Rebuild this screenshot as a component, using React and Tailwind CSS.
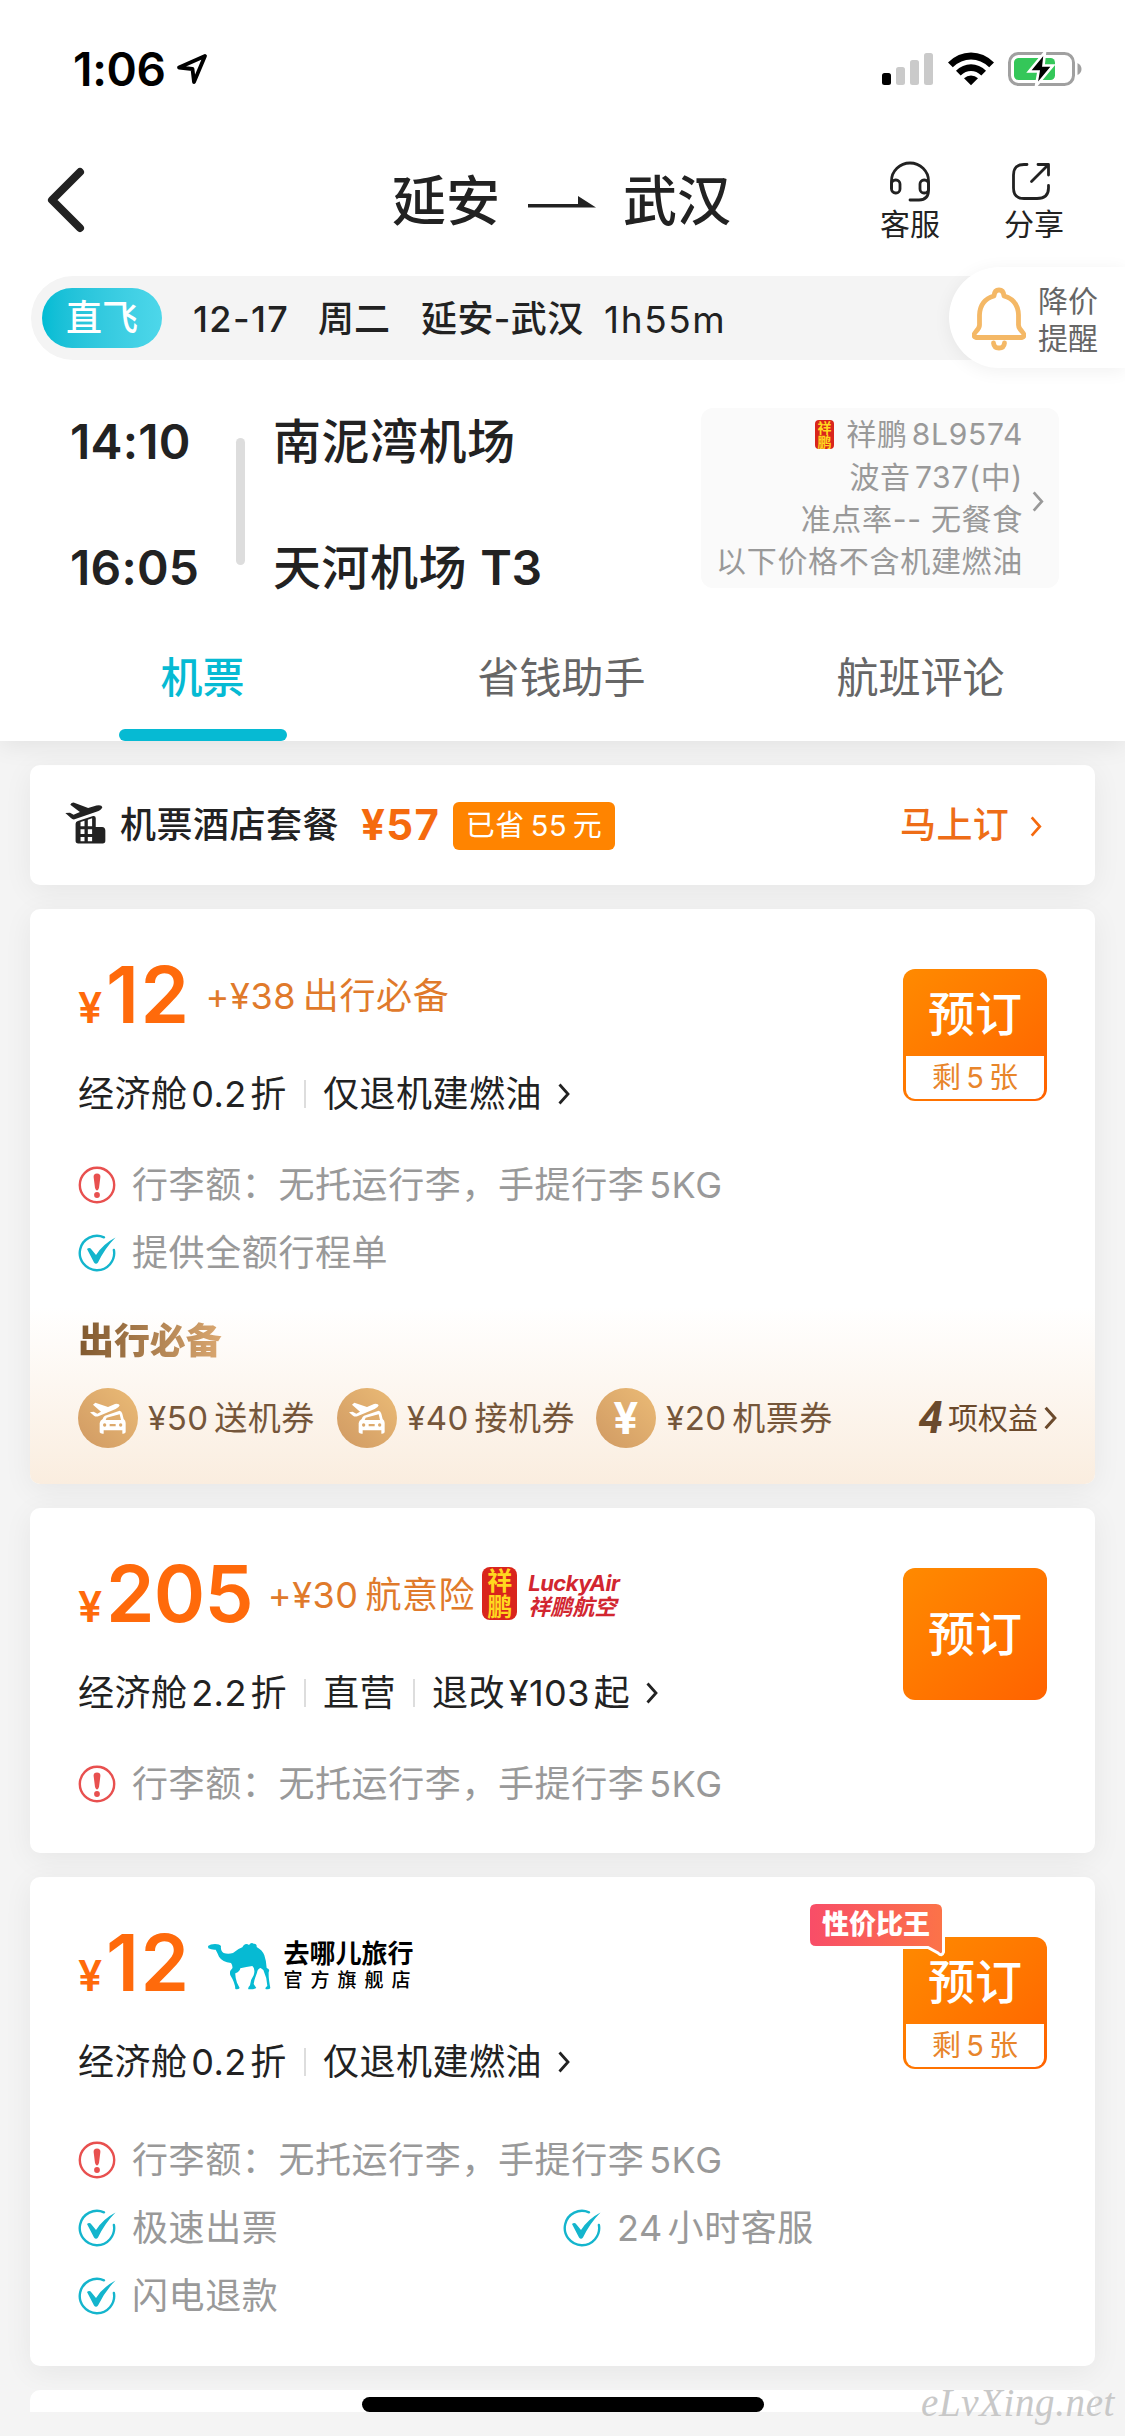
import React from "react";

const offers = [
  {
    id: 1,
    price: "12",
    extra: "+¥38 出行必备",
    cabin: "经济舱 0.2 折",
    rules: ["仅退机建燃油"],
    left: "剩 5 张",
    features: [
      { type: "warn", text: "行李额：无托运行李，手提行李 5KG" },
      { type: "ok", text: "提供全额行程单" },
    ],
    benefits: [
      { icon: "car", text: "¥50 送机券" },
      { icon: "car", text: "¥40 接机券" },
      { icon: "yuan", text: "¥20 机票券" },
    ],
  },
  {
    id: 2,
    price: "205",
    extra: "+¥30 航意险",
    logo: "lucky",
    cabin: "经济舱 2.2 折",
    rules: ["直营", "退改 ¥103 起"],
    features: [{ type: "warn", text: "行李额：无托运行李，手提行李 5KG" }],
  },
  {
    id: 3,
    price: "12",
    logo: "qunar",
    cabin: "经济舱 0.2 折",
    rules: ["仅退机建燃油"],
    left: "剩 5 张",
    badge: "性价比王",
    features: [
      { type: "warn", text: "行李额：无托运行李，手提行李 5KG" },
      { type: "ok", text: "极速出票", half: true },
      { type: "ok", text: "24 小时客服", half: true },
      { type: "ok", text: "闪电退款" },
    ],
  },
];

const Chevron = ({ className }) => (
  <svg viewBox="0 0 12 22" className={className} fill="none" stroke="currentColor" strokeWidth="2.8">
    <path d="M1.5 1.5 L10 11 L1.5 20.5" />
  </svg>
);

const StatusBar = () => (
  <div className="flex h-[138px] items-center justify-between pl-[73px] pr-[42px]">
    <div className="flex items-center gap-[10px]">
      <span className="text-[46px] font-semibold leading-none tracking-[-0.3px] text-black">1:06</span>
      <svg width="32" height="32" viewBox="0 0 32 32" fill="none" stroke="#000" strokeWidth="3.8" strokeLinejoin="round">
        <path d="M29 3 L3 14.5 L16.5 16 L18 29 Z" />
      </svg>
    </div>
    <div className="flex items-center">
      <svg width="52" height="34" viewBox="0 0 52 34">
        <rect x="0" y="21" width="9" height="12" rx="2.5" fill="#000" />
        <rect x="14" y="15" width="9" height="18" rx="2.5" fill="#cacaca" />
        <rect x="28" y="8" width="9" height="25" rx="2.5" fill="#cacaca" />
        <rect x="42" y="1" width="9" height="32" rx="2.5" fill="#cacaca" />
      </svg>
      <svg className="ml-[14px]" width="46" height="34" viewBox="0 0 46 34">
        <path d="M0 10.5 Q10 0.5 23 0.5 Q36 0.5 46 10.5 L41.2 15.3 Q33 7.6 23 7.6 Q13 7.6 4.8 15.3 Z" />
        <path d="M8 18.8 Q14.5 12.3 23 12.3 Q31.5 12.3 38 18.8 L33.3 23.4 Q28.5 19 23 19 Q17.5 19 12.7 23.4 Z" />
        <path d="M16 26.3 Q19 23.6 23 23.6 Q27 23.6 30 26.3 L23 33.3 Z" />
      </svg>
      <svg className="ml-[14px]" width="75" height="36" viewBox="0 0 75 36">
        <rect x="1.5" y="2.5" width="64" height="31" rx="9" fill="none" stroke="#a0a0a0" strokeWidth="3" />
        <rect x="6" y="7" width="41" height="22" rx="4.5" fill="#34c759" />
        <path d="M69.5 12 Q73.5 14 73.5 18 Q73.5 22 69.5 24 Z" fill="#a0a0a0" />
        <path d="M37 1 L21 20.5 H30.5 L28 35 L45 14.5 H35.5 Z" fill="#000" stroke="#fff" strokeWidth="2.6" />
      </svg>
    </div>
  </div>
);

const NavBar = () => (
  <div className="flex h-[138px] items-center">
    <div className="w-[304px] pl-[45px]">
      <svg className="mb-[14px]" width="42" height="66" viewBox="0 0 42 66" fill="none" stroke="#222" strokeWidth="8" strokeLinecap="round" strokeLinejoin="round">
        <path d="M35 5 L7 33 L35 61" />
      </svg>
    </div>
    <div className="mb-[10px] flex flex-1 items-center justify-center pr-[2px] text-[54px] font-medium leading-none text-[#222]">
      延安
      <svg className="ml-[28px] mr-[27px]" width="68" height="12" viewBox="0 0 68 12" fill="#222">
        <path d="M0 8 H50 V0 L68 11.5 H0 Z" />
      </svg>
      武汉
    </div>
    <div className="flex w-[304px] gap-[64px] pb-[12px] pl-[59px] text-[30px] leading-[36px] text-[#222]">
      <div className="flex w-[60px] flex-col items-center">
        <svg className="mb-[3px]" width="42" height="42" viewBox="0 0 42 42" fill="none" stroke="currentColor" strokeWidth="2.8" strokeLinecap="round">
          <path d="M2.5 27 V20 A18.5 18 0 0 1 39.5 20 V29 Q39.5 39 30 39 H21" />
          <rect x="2.5" y="19" width="8.5" height="13" rx="4" />
          <rect x="31" y="19" width="8.5" height="13" rx="4" />
        </svg>
        客服
      </div>
      <div className="flex w-[60px] flex-col items-center">
        <svg className="mr-[6px] mb-[3px]" width="40" height="42" viewBox="1 0 40 42" fill="none" stroke="currentColor" strokeWidth="2.8" strokeLinecap="round" strokeLinejoin="round">
          <path d="M17 3.5 H14 Q3.5 3.5 3.5 14 V27 Q3.5 37.5 14 37.5 H27 Q38.5 37.5 38.5 27 V24.5" />
          <path d="M28 3.5 H38.5 V14 M38 4 L21.5 20.5" />
        </svg>
        分享
      </div>
    </div>
  </div>
);

const RouteBar = () => (
  <div className="relative ml-[31px] flex h-[84px] items-center rounded-l-full bg-[#f4f4f4] pl-[11px] text-[36px] leading-none text-[#222]">
    <span className="flex h-[60px] w-[120px] items-center justify-center rounded-full bg-linear-to-r from-[#00bcd4] to-[#4dd7ea] font-medium text-white">
      直飞
    </span>
    <span className="ml-[31px] w-[125px] pt-[2px] font-medium tracking-[1.4px]">12-17</span>
    <span className="w-[103px] pt-[2px] font-medium">周二</span>
    <span className="w-[183px] pt-[2px] font-medium tracking-[0.4px]">延安-武汉</span>
    <span className="pt-[2px] text-[37px] tracking-[1.6px]">1h55m</span>
    <div className="absolute right-0 top-[-9px] flex h-[101px] w-[176px] items-center rounded-l-full bg-white pl-[23px] shadow-[0_3px_18px_rgba(0,0,0,0.06)]">
      <svg className="mt-[3px]" width="54" height="64" viewBox="0 0 54 64" fill="none" stroke="#f4b866" strokeWidth="4.8" strokeLinejoin="round" strokeLinecap="round">
        <path d="M27 3 Q31.5 3 32 9 Q46 13 46.5 28 V38 Q46.5 41 50 44.5 Q54 49 50 50.5 H4 Q0 49 4 44.5 Q7.5 41 7.5 38 V28 Q8 13 22 9 Q22.5 3 27 3 Z" />
        <path d="M21.5 56 Q22 61 27 61 Q32 61 32.5 56" />
      </svg>
      <div className="ml-[12px] mt-[5px] text-[30px] leading-[37px] text-[#666]">
        降价
        <br />
        提醒
      </div>
    </div>
  </div>
);

const Seal = ({ className }) => (
  <span className={`flex flex-col items-center justify-center bg-[#d9251c] font-bold text-[#ffd81f] ${className}`}>
    <span>祥</span>
    <span>鹏</span>
  </span>
);

const FlightInfo = () => (
  <div className="flex h-[269px] items-start pl-[70px] pr-[66px] pt-[48px]">
    <div className="flex h-[194px] w-[166px] flex-col justify-between text-[48px] font-semibold leading-[68px] tracking-[0.2px] text-[#222]">
      <span>14:10</span>
      <span>16:05</span>
    </div>
    <div className="mt-[30px] h-[127px] w-[9px] rounded-full bg-[#ddd]" />
    <div className="ml-[28px] flex h-[194px] flex-1 flex-col justify-between text-[48px] font-medium leading-[68px] tracking-[0.5px] text-[#222]">
      <span>南泥湾机场</span>
      <span>
        天河机场 <span className="font-semibold tracking-[-0.5px]">T3</span>
      </span>
    </div>
    <div className="flex h-[180px] w-[358px] items-center rounded-[12px] bg-[#fafafa] pr-[15px] text-[30px] leading-[42.3px] tracking-[0.7px] text-[#999]">
      <div className="flex flex-1 flex-col items-end whitespace-nowrap">
        <span className="flex items-center [word-spacing:-5px]">
          <Seal className="mr-[12px] h-[29px] w-[19px] rounded-[4px] text-[14px] leading-[14px]" />
          祥鹏 8L9574
        </span>
        <span className="[word-spacing:-5px]">波音 737(中)</span>
        <span>准点率-- 无餐食</span>
        <span>以下价格不含机建燃油</span>
      </div>
      <Chevron className="ml-[9px] mt-[7px] h-[21px] w-[12px]" />
    </div>
  </div>
);

const Tabs = () => {
  const tabs = ["机票", "省钱助手", "航班评论"];
  return (
    <div className="flex h-[112px] pl-[23px] pr-[25px] text-[42px] leading-[97px] text-[#666]">
      {tabs.map((tab, i) => (
        <div
          key={tab}
          className={
            i === 0
              ? "flex h-full flex-1 flex-col items-center justify-between font-medium text-[#06bad3]"
              : "flex h-full flex-1 flex-col items-center justify-between"
          }
        >
          {tab}
          {i === 0 && <span className="h-[12px] w-[168px] rounded-full bg-[#06bad3]" />}
        </div>
      ))}
    </div>
  );
};

const PackageCard = () => (
  <div className="flex h-[120px] shrink-0 items-center rounded-[10px] bg-white pl-[35px] pr-[53px] text-[36px] leading-none shadow-[0_6px_30px_rgba(0,0,0,0.06)]">
    <svg className="mb-[4px]" width="41" height="44" viewBox="43 62 124 132" fill="#222">
      <path d="M44 98 L58 97 L69 103 L88 95 L59 73 Q62 66 69 66 L113 83 L138 75 Q154 72 156 80 Q152 89 138 94 L72 117 Q65 118 61 113 Z" />
      <path
        fillRule="evenodd"
        d="M75 130 Q75 124 82 122 L128 107 Q136 106 136 114 V140 H155 Q165 141 165 151 V182 Q165 190 157 190 H83 Q75 190 75 182 Z M90 125 V138 H102 V121 Z M112 118 V138 H125 V114 Z M90 147 V161 H102 V147 Z M112 147 V161 H125 V147 Z M90 170 V183 H102 V170 Z M112 170 V183 H125 V170 Z"
      />
    </svg>
    <span className="ml-[14px] font-medium tracking-[0.5px] text-[#222]">机票酒店套餐</span>
    <span className="ml-[22px] text-[42px] font-bold tracking-[1.4px] text-[#f56a0e]">¥57</span>
    <span className="ml-auto mr-[285px] mt-[2px] flex h-[48px] w-[162px] items-center justify-center rounded-[6px] bg-[#ff8400] pb-[1px] text-[29px] tracking-[0.6px] text-white [word-spacing:-3px]">
      已省 55 元
    </span>
    <span className="font-medium tracking-[0.3px] text-[#ee6d17]">马上订</span>
    <Chevron className="ml-[21px] mt-[3px] h-[21px] w-[12px] text-[#f56a0e]" />
  </div>
);

const LuckyLogo = () => (
  <div className="ml-[7px] flex items-center self-center">
    <Seal className="h-[53px] w-[35px] rounded-[8px] text-[25px] leading-[26px]" />
    <div className="ml-[11px] flex flex-col font-bold italic text-[#d22630]">
      <span className="text-[22px] leading-[26px] tracking-[-0.5px]">LuckyAir</span>
      <span className="text-[22px] leading-[22px]">祥鹏航空</span>
    </div>
  </div>
);

const QunarLogo = () => (
  <div className="ml-[16px] mt-[6px] flex items-center self-center text-black">
    <svg width="64" height="48" viewBox="42 68 192 144" fill="#06bad3">
      <path d="M45 80 Q52 74 66 74 Q80 74 84 80 Q82 95 92 101 Q105 106 120 101 Q135 88 148 84 L152 78 Q160 70 168 77 Q174 68 182 73 Q192 72 191 83 Q208 92 214 108 Q220 125 221 146 Q232 150 227 158 Q226 175 232 206 Q230 211 217 209 Q217 203 223 200 Q222 175 211 152 L203 146 Q194 148 192 160 Q184 180 182 194 L190 206 L180 210 H166 Q164 205 171 198 Q172 182 182 168 Q188 148 178 140 Q160 142 142 147 Q140 158 127 162 Q126 172 132 190 L140 206 Q136 211 127 209 Q126 190 112 168 Q108 156 118 147 Q120 140 114 131 Q88 128 78 112 Q72 98 68 91 Q56 92 46 87 Z" />
    </svg>
    <div className="ml-[13px]">
      <div className="text-[26px] font-bold leading-[29px]">去哪儿旅行</div>
      <div className="text-[19px] font-medium leading-[25px] tracking-[8px]">官方旗舰店</div>
    </div>
  </div>
);

const FeatureIcon = ({ type }) =>
  type === "warn" ? (
    <svg className="shrink-0" width="38" height="38" viewBox="0 0 38 38">
      <circle cx="19" cy="19" r="17.2" fill="none" stroke="#e8504f" strokeWidth="2.4" />
      <path d="M19 7.5 Q22.6 7.5 22.4 11 L21 22 Q20 24.5 19 24.5 Q18 24.5 17 22 L15.6 11 Q15.4 7.5 19 7.5 Z" fill="#e8504f" />
      <circle cx="19" cy="29" r="2.9" fill="#e8504f" />
    </svg>
  ) : (
    <svg className="shrink-0" width="38" height="38" viewBox="0 0 38 38" fill="none" stroke="#14b5cd">
      <path d="M26 3.3 A17.2 17.2 0 1 0 35.9 16" strokeWidth="2.4" strokeLinecap="round" />
      <path d="M9 15 Q11.5 13 13.5 15.5 L18 21 Q25 10 37.5 3.5 Q27 14 20 28.5 Q18 31 16 28.5 Z" fill="#14b5cd" stroke="none" />
    </svg>
  );

const BenefitIcon = ({ icon }) => (
  <span className="flex h-[60px] w-[60px] items-center justify-center rounded-full bg-linear-to-tr from-[#d09a63] to-[#ebbb76]">
    {icon === "car" ? (
      <svg width="38" height="34" viewBox="88 362 114 102" fill="#fff">
        <path d="M91 396 L102 394 L113 400 L124 394 L100 373 L107 367 L145 380 L166 371 Q178 369 180 375 Q178 382 168 386 L116 408 Q108 410 103 406 Z" />
        <path
          fillRule="evenodd"
          d="M136 406 L180 391 Q186 392 188 400 L192 416 Q198 420 198 428 V456 Q196 461 188 460 V450 H132 V460 Q122 461 120 456 V428 Q121 420 129 416 Q131 408 136 406 Z M141 412 L138 419 H184 L180 402 Z M135 429 A5 5 0 1 0 135 439 A5 5 0 1 0 135 429 Z M150 431 V438 H168 V431 Z M183 429 A5 5 0 1 0 183 439 A5 5 0 1 0 183 429 Z"
        />
      </svg>
    ) : (
      <span className="text-[44px] font-bold leading-none text-white">¥</span>
    )}
  </span>
);

const BookButton = ({ left, badge }) => (
  <div className="relative ml-auto mr-[48px] mt-[60px] flex h-[132px] w-[144px] shrink-0 flex-col rounded-[12px] bg-linear-to-br from-[#ff8a00] to-[#ff6200] p-[3px] text-center">
    <span
      className={
        left
          ? "h-[84px] text-[47px] font-medium leading-[84px] text-white"
          : "h-[126px] text-[47px] font-medium leading-[126px] text-white"
      }
    >
      预订
    </span>
    {left && (
      <span className="flex-1 rounded-b-[9px] bg-white text-[29px] leading-[43px] text-[#e8852b] [word-spacing:-3px]">
        {left}
      </span>
    )}
    {badge && (
      <div className="absolute left-[-96px] top-[-36px]">
        <svg width="138" height="58" viewBox="0 0 138 58">
          <defs>
            <linearGradient id="badge" x1="0" y1="0" x2="1" y2="0">
              <stop offset="0" stopColor="#f84d68" />
              <stop offset="1" stopColor="#fc7348" />
            </linearGradient>
          </defs>
          <path
            d="M9 1.5 H129 Q136.5 1.5 136.5 9 V51 Q135 56 131 52 L121 46.5 H9 Q1.5 46.5 1.5 39 V9 Q1.5 1.5 9 1.5 Z"
            fill="url(#badge)"
            stroke="#fff"
            strokeWidth="3"
          />
        </svg>
        <span className="absolute left-[15px] top-0 whitespace-nowrap text-[27px] font-black leading-[48px] text-white">
          {badge}
        </span>
      </div>
    )}
  </div>
);

const Benefits = ({ items }) => (
  <div className="mt-[20px] flex flex-1 flex-col rounded-b-[10px] bg-linear-to-b from-white to-[#faeddf] pl-[48px] pr-[38px] pt-[8px]">
    <h3 className="w-fit bg-linear-to-r from-[#80592f] to-[#dba871] bg-clip-text text-[36px] font-black leading-[52px] tracking-[-0.1px] text-transparent">
      出行必备
    </h3>
    <div className="mt-[21px] flex items-center text-[33px] leading-none text-[#75563a]">
      {items.map((b) => (
        <div key={b.text} className="flex w-[259px] items-center gap-[10px] whitespace-nowrap tracking-[0.5px] [word-spacing:-4px]">
          <BenefitIcon icon={b.icon} />
          {b.text}
        </div>
      ))}
      <div className="ml-auto flex items-center text-[30px] text-[#6b4a2c]">
        <span className="mr-[5px] font-['Roboto','Inter',sans-serif] text-[44px] font-bold italic">4</span>
        项权益
        <Chevron className="ml-[6px] h-[24px] w-[13px]" />
      </div>
    </div>
  </div>
);

const OfferCard = ({ offer, className }) => (
  <div className={`flex flex-col rounded-[10px] bg-white shadow-[0_6px_30px_rgba(0,0,0,0.06)] ${className}`}>
    <div className="flex">
      <div className="flex-1 pl-[48px] pt-[47px]">
        <div className="flex h-[77px] items-baseline whitespace-nowrap text-[#ff6a0b]">
          <span className="w-[28px] text-[43px] font-semibold leading-none">¥</span>
          <span
            className={
              offer.price.length > 2
                ? "text-[78px] font-semibold leading-none tracking-[-0.8px]"
                : "text-[78px] font-semibold leading-none tracking-[1.5px]"
            }
          >
            {offer.price}
          </span>
          {offer.extra && (
            <span className="ml-[15px] mt-[2px] self-center text-[36px] leading-none tracking-[0.6px] text-[#e07a2b] [word-spacing:-4px]">
              {offer.extra}
            </span>
          )}
          {offer.logo === "lucky" && <LuckyLogo />}
          {offer.logo === "qunar" && <QunarLogo />}
        </div>
        <div className="mt-[36px] flex h-[50px] items-center whitespace-nowrap text-[36px] leading-none tracking-[0.5px] text-[#222] [word-spacing:-7px]">
          {offer.cabin}
          {offer.rules.map((rule) => (
            <React.Fragment key={rule}>
              <span className="ml-[17px] mr-[17px] h-[28px] w-[2px] bg-[#ddd]" />
              {rule}
            </React.Fragment>
          ))}
          <Chevron className="ml-[16px] h-[22px] w-[12px]" />
        </div>
      </div>
      <BookButton left={offer.left} badge={offer.badge} />
    </div>
    <div className={`flex flex-wrap pl-[48px] ${offer.id === 3 ? "pt-[39px]" : "pt-[32px]"}`}>
      {offer.features.map((f) => (
        <div
          key={f.text}
          className={`flex h-[68px] items-center gap-[16px] whitespace-nowrap text-[36px] leading-none tracking-[0.6px] text-[#999] [word-spacing:-6px] ${
            f.half ? "w-[485px]" : "w-full"
          }`}
        >
          <FeatureIcon type={f.type} />
          {f.text}
        </div>
      ))}
    </div>
    {offer.benefits && <Benefits items={offer.benefits} />}
  </div>
);

const cardHeights = {
  1: "h-[575px]",
  2: "h-[345px]",
  3: "h-[489px]",
};

const App = () => {
  return (
    <div className="relative h-[2436px] w-[1125px] overflow-hidden bg-[#f4f4f4] font-['Inter','Noto_Sans_CJK_SC',sans-serif]">
      <header className="relative h-[741px] bg-white shadow-[0_4px_24px_rgba(0,0,0,0.08)]">
        <StatusBar />
        <NavBar />
        <RouteBar />
        <FlightInfo />
        <Tabs />
      </header>

      <main className="flex h-[1671px] flex-col gap-[24px] overflow-hidden px-[30px] pt-[24px]">
        <PackageCard />
        {offers.map((offer) => (
          <OfferCard key={offer.id} offer={offer} className={`shrink-0 ${cardHeights[offer.id]}`} />
        ))}
        <div className="h-[60px] shrink-0 rounded-[10px] bg-white" />
      </main>

      <div className="absolute left-[362px] top-[2397px] h-[15px] w-[402px] rounded-full bg-black" />
      <span className="absolute right-[10px] top-[2379px] font-['Liberation_Serif',serif] text-[39px] italic leading-[48px] tracking-[0.6px] text-[#c8c8c8]">
        eLvXing.net
      </span>
    </div>
  );
};

export default App;
